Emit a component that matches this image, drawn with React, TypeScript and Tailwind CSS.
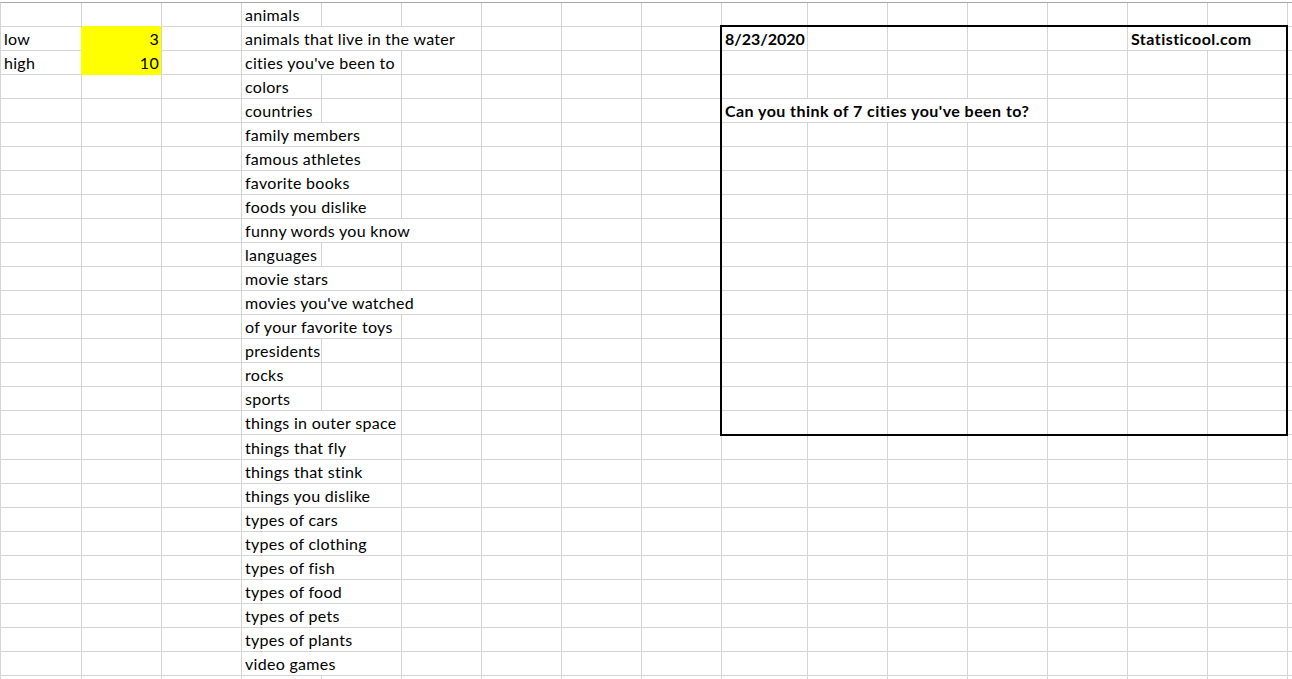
import React from "react";

type Cell = { col: number; text: string; span?: number; bold?: boolean; right?: boolean; yellow?: boolean; tight?: boolean };

const COLS = [81, 80, 80, 80, 80, 80, 80, 80, 80, 86, 80, 80, 80, 80, 80, 80, 80];

const topics: [string, number][] = [
  ["animals", 1],
  ["animals that live in the water", 3],
  ["cities you've been to", 2],
  ["colors", 1],
  ["countries", 1],
  ["family members", 2],
  ["famous athletes", 2],
  ["favorite books", 2],
  ["foods you dislike", 2],
  ["funny words you know", 3],
  ["languages", 1],
  ["movie stars", 2],
  ["movies you've watched", 3],
  ["of your favorite toys", 2],
  ["presidents", 1],
  ["rocks", 1],
  ["sports", 1],
  ["things in outer space", 2],
  ["things that fly", 2],
  ["things that stink", 2],
  ["things you dislike", 2],
  ["types of cars", 2],
  ["types of clothing", 2],
  ["types of fish", 2],
  ["types of food", 2],
  ["types of pets", 2],
  ["types of plants", 2],
  ["video games", 2],
];

const buildRows = (): Cell[][] =>
  topics.map(([t, span], i) => {
    const cells: Cell[] = [{ col: 3, text: t, span }];
    if (i === 1) {
      cells.push({ col: 0, text: "low" }, { col: 1, text: "3", right: true, yellow: true });
      cells.push(
        { col: 9, text: "8/23/2020", bold: true, tight: true },
        { col: 14, text: "Statisticool.com", bold: true, span: 2 }
      );
    }
    if (i === 2) cells.push({ col: 0, text: "high" }, { col: 1, text: "10", right: true, yellow: true });
    if (i === 4) cells.push({ col: 9, text: "Can you think of 7 cities you've been to?", bold: true, span: 4 });
    return cells;
  });

const Row = ({ cells, idx }: { cells: Cell[]; idx: number }) => {
  const h = idx === 18 ? "h-[25px]" : "h-[24px]";
  const out: React.ReactNode[] = [];
  let c = 0;
  while (c < COLS.length) {
    const cell = cells.find((x) => x.col === c);
    const span = cell?.span ?? 1;
    let w = 0;
    for (let k = 0; k < span; k++) w += COLS[c + k];
    // fill hides the gridlines around the yellow cells
    const yellowLeft = c === 0 && (idx === 1 || idx === 2);
    const yellowBelow = c === 1 && idx === 0;
    const track = cell?.tight ? "tracking-normal" : cell?.bold ? "tracking-[0.45px]" : "tracking-[0.3px]";
    out.push(
      <div
        key={c}
        style={{ width: w }}
        className={`${h} shrink-0 flex items-end pb-[2px] border-r border-b whitespace-nowrap overflow-hidden ${
          cell?.yellow ? "bg-[#ffff00] border-b-[#ffff00]" : ""
        } ${cell?.yellow && idx === 2 ? "border-b-[#d4d4d4]" : ""} ${
          yellowLeft ? "border-r-[#ffff00]" : "border-r-[#d4d4d4]"
        } ${yellowBelow ? "border-b-[#ffff00]" : cell?.yellow ? "" : "border-b-[#d4d4d4]"} ${
          cell?.right ? "justify-end pr-[2px]" : "pl-[3px]"
        } ${cell?.bold ? "font-bold" : ""} ${track}`}
      >
        {cell?.text}
      </div>
    );
    c += span;
  }
  return <div className="flex">{out}</div>;
};

export default function App() {
  const rows = buildRows();
  return (
    <div className="relative w-[1292px] h-[679px] overflow-hidden bg-white pt-[2px] font-['Lato',sans-serif] text-[16px] leading-[18px] text-black">
      <div className="border-t border-l border-t-[#a6a6a6] border-l-[#d4d4d4] w-max">
        {rows.map((r, i) => (
          <Row key={i} cells={r} idx={i} />
        ))}
        <Row cells={[]} idx={28} />
      </div>
      {/* outline around J2:P18 */}
      <div className="absolute left-[720px] top-[25px] w-[568px] h-[411px] border-2 border-black pointer-events-none" />
    </div>
  );
}
